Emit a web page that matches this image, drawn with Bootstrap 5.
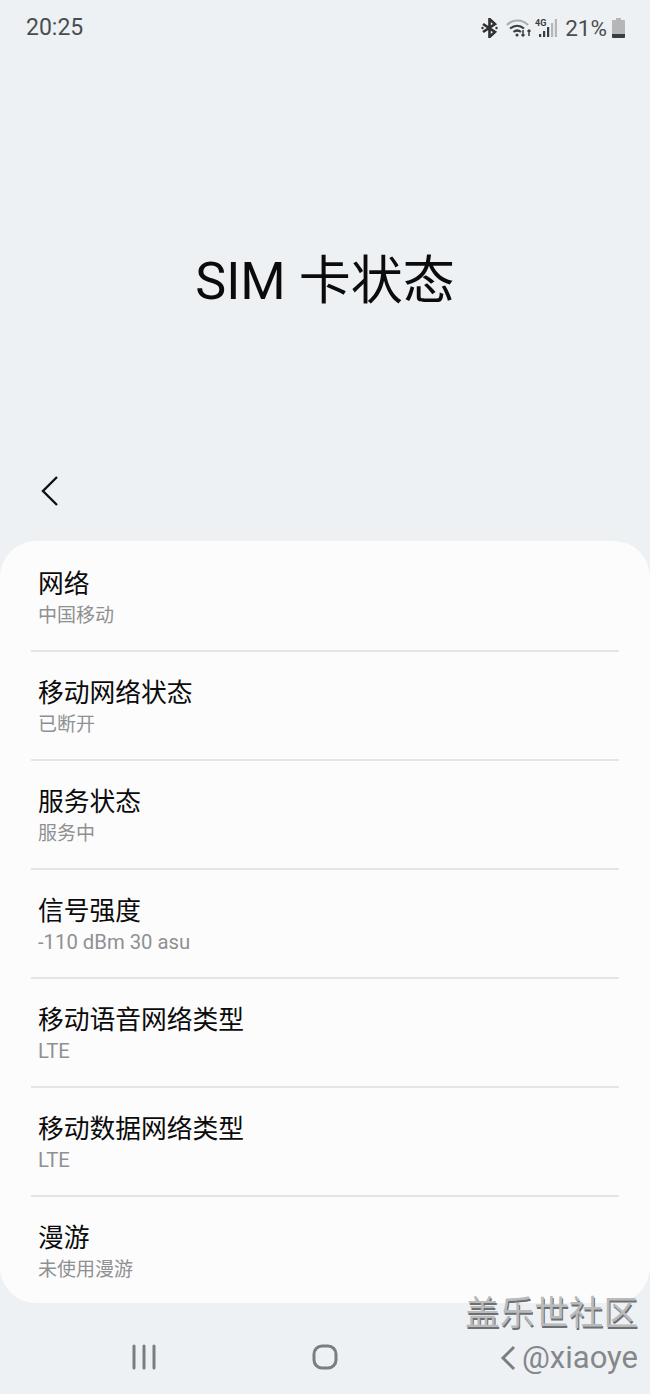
<!DOCTYPE html>
<html lang="zh-CN">
<head>
    <meta charset="UTF-8" />
    <meta name="viewport" content="width=device-width, initial-scale=1.0" />
    <title>SIM 卡状态</title>
    <link href="https://cdn.jsdelivr.net/npm/bootstrap@5.3.3/dist/css/bootstrap.min.css" rel="stylesheet">
    <style>
        html, body {
            height: 1394px;
            overflow: hidden;
        }

        body {
            font-family: Roboto, "Noto Sans CJK SC", sans-serif;
            background-color: #edf1f4;
            color: #0b0b0b;
        }

        .status-bar {
            height: 54px;
            padding: 13px 25px 0 26px;
            color: #4a4d50;
        }

        .status-time {
            font-size: 23px;
            line-height: 30px;
        }

        .status-icons {
            height: 30px;
        }

        .status-pct {
            font-size: 22.5px;
            line-height: 30px;
            margin: 0 5px 0 8px;
        }

        .icon-wifi {
            margin: 0 3px 0 8px;
        }

        .page-title {
            height: 412px;
            padding-top: 198px;
            font-size: 52px;
            line-height: 60px;
            text-align: center;
            margin: 0;
            font-weight: 400;
        }

        .back-row {
            height: 75px;
            padding: 9px 0 0 40px;
        }

        .info-panel {
            height: 762px;
            background-color: #fcfcfc;
            border-radius: 36px;
            padding: 2px 31px 0;
        }

        .info-row {
            height: 109px;
            padding: 24px 0 0 7px;
            border-bottom: 2px solid #e4e5e6;
        }

        .info-row:last-child {
            border-bottom: 0;
        }

        .info-name {
            font-size: 25.75px;
            line-height: 35px;
        }

        .info-value {
            font-size: 19px;
            line-height: 27px;
            color: #8f9092;
        }

        .info-latin {
            font-size: 20.3px;
        }

        .nav-bar {
            height: 91px;
            position: relative;
        }

        .nav-icons {
            padding: 41px 0 0 131px;
            gap: 155px;
        }

        .watermark {
            position: absolute;
            right: 12px;
            top: -13px;
            text-align: right;
        }

        .wm-title {
            font-family: "Noto Sans CJK SC", sans-serif;
            font-size: 34.6px;
            line-height: 40px;
            font-weight: 400;
            color: #b9babb;
            text-shadow: 1px 2px 0 #6d6f71;
        }

        .wm-user {
            font-size: 31px;
            line-height: 36px;
            margin-top: 10px;
            color: #85878a;
        }

        .wm-back {
            margin-right: 5px;
        }
    </style>
</head>
<body>
<div class="status-bar d-flex justify-content-between">
    <div class="status-time">20:25</div>
    <div class="status-icons d-flex align-items-center">
        <svg width="17" height="20" viewBox="0 0 17 20" fill="none" stroke="#2e3032" stroke-width="2.6"><path d="M2 6l12 8-5.500 5V1L14 6 2 14"/><circle cx="1.500" cy="10" r="1.200" fill="#2e3032" stroke="none"/><circle cx="15.500" cy="10" r="1.200" fill="#2e3032" stroke="none"/></svg>
        <svg width="26" height="18" viewBox="0 0 26 18" fill="none" class="icon-wifi"><path d="M1 6c6-6 15-6 21 0" stroke="#a9abad" stroke-width="2.200"/><path d="M4 9.500c4.500-3.500 10-3.500 14 0M7.500 13c2.500-2 5-2 7.500 0" stroke="#3a3c3e" stroke-width="2.200"/><circle cx="11" cy="16" r="1.500" fill="#3a3c3e"/><path d="M17 11v6M15.500 15.500l1.500 1.500 1.500-1.500M23 17v-6M21.500 12.500l1.500-1.500 1.500 1.500" stroke="#3a3c3e" stroke-width="1.500"/></svg>
        <svg width="22" height="18" viewBox="0 0 22 18">
            <text x="0" y="7" font-family="Roboto" font-size="9" font-weight="700" fill="#3a3c3e">4G</text>
            <rect x="4" y="15" width="2.200" height="3" fill="#3a3c3e"/><rect x="8" y="12" width="2.200" height="6" fill="#3a3c3e"/><rect x="12" y="8" width="2.200" height="10" fill="#3a3c3e"/><rect x="16" y="4" width="2.200" height="14" fill="#b4b6b8"/><rect x="19.800" y="0" width="2.200" height="18" fill="#b4b6b8"/>
        </svg>
        <div class="status-pct">21%</div>
        <svg width="13" height="20" viewBox="0 0 13 20"><path d="M4 0h5v2h3a1 1 0 0 1 1 1v16a1 1 0 0 1-1 1H1a1 1 0 0 1-1-1V3a1 1 0 0 1 1-1h3z" fill="#b4b6b8"/><path d="M0 16h13v3a1 1 0 0 1-1 1H1a1 1 0 0 1-1-1z" fill="#3a3c3e"/></svg>
    </div>
</div>

<h1 class="page-title">SIM 卡状态</h1>

<div class="back-row">
    <svg width="20" height="32" viewBox="0 0 20 32" fill="none" stroke="#111" stroke-width="2.4"><path d="M17 2L3 16l14 14"/></svg>
</div>

<div class="info-panel">
    <div class="info-row"><div class="info-name">网络</div><div class="info-value">中国移动</div></div>
    <div class="info-row"><div class="info-name">移动网络状态</div><div class="info-value">已断开</div></div>
    <div class="info-row"><div class="info-name">服务状态</div><div class="info-value">服务中</div></div>
    <div class="info-row"><div class="info-name">信号强度</div><div class="info-value info-latin">-110 dBm 30 asu</div></div>
    <div class="info-row"><div class="info-name">移动语音网络类型</div><div class="info-value info-latin">LTE</div></div>
    <div class="info-row"><div class="info-name">移动数据网络类型</div><div class="info-value info-latin">LTE</div></div>
    <div class="info-row"><div class="info-name">漫游</div><div class="info-value">未使用漫游</div></div>
</div>

<div class="nav-bar">
    <div class="nav-icons d-flex align-items-center">
        <svg width="26" height="26" viewBox="0 0 26 26" fill="none" stroke="#7b7d80" stroke-width="3" stroke-linecap="round"><path d="M3 2v22M13 2v22M23 2v22"/></svg>
        <svg width="26" height="26" viewBox="0 0 26 26" fill="none" stroke="#7b7d80" stroke-width="3"><rect x="2" y="2" width="22" height="22" rx="8"/></svg>
    </div>
    <div class="watermark">
        <div class="wm-title">盖乐世社区</div>
        <div class="wm-user d-flex align-items-center justify-content-end">
            <svg width="17" height="26" viewBox="0 0 17 26" fill="none" stroke="#7b7d80" stroke-width="3" class="wm-back"><path d="M14 2L3 13l11 11"/></svg>
            <span>@xiaoye</span>
        </div>
    </div>
</div>
<script src="https://cdn.jsdelivr.net/npm/bootstrap@5.3.3/dist/js/bootstrap.bundle.min.js"></script>
</body>
</html>
